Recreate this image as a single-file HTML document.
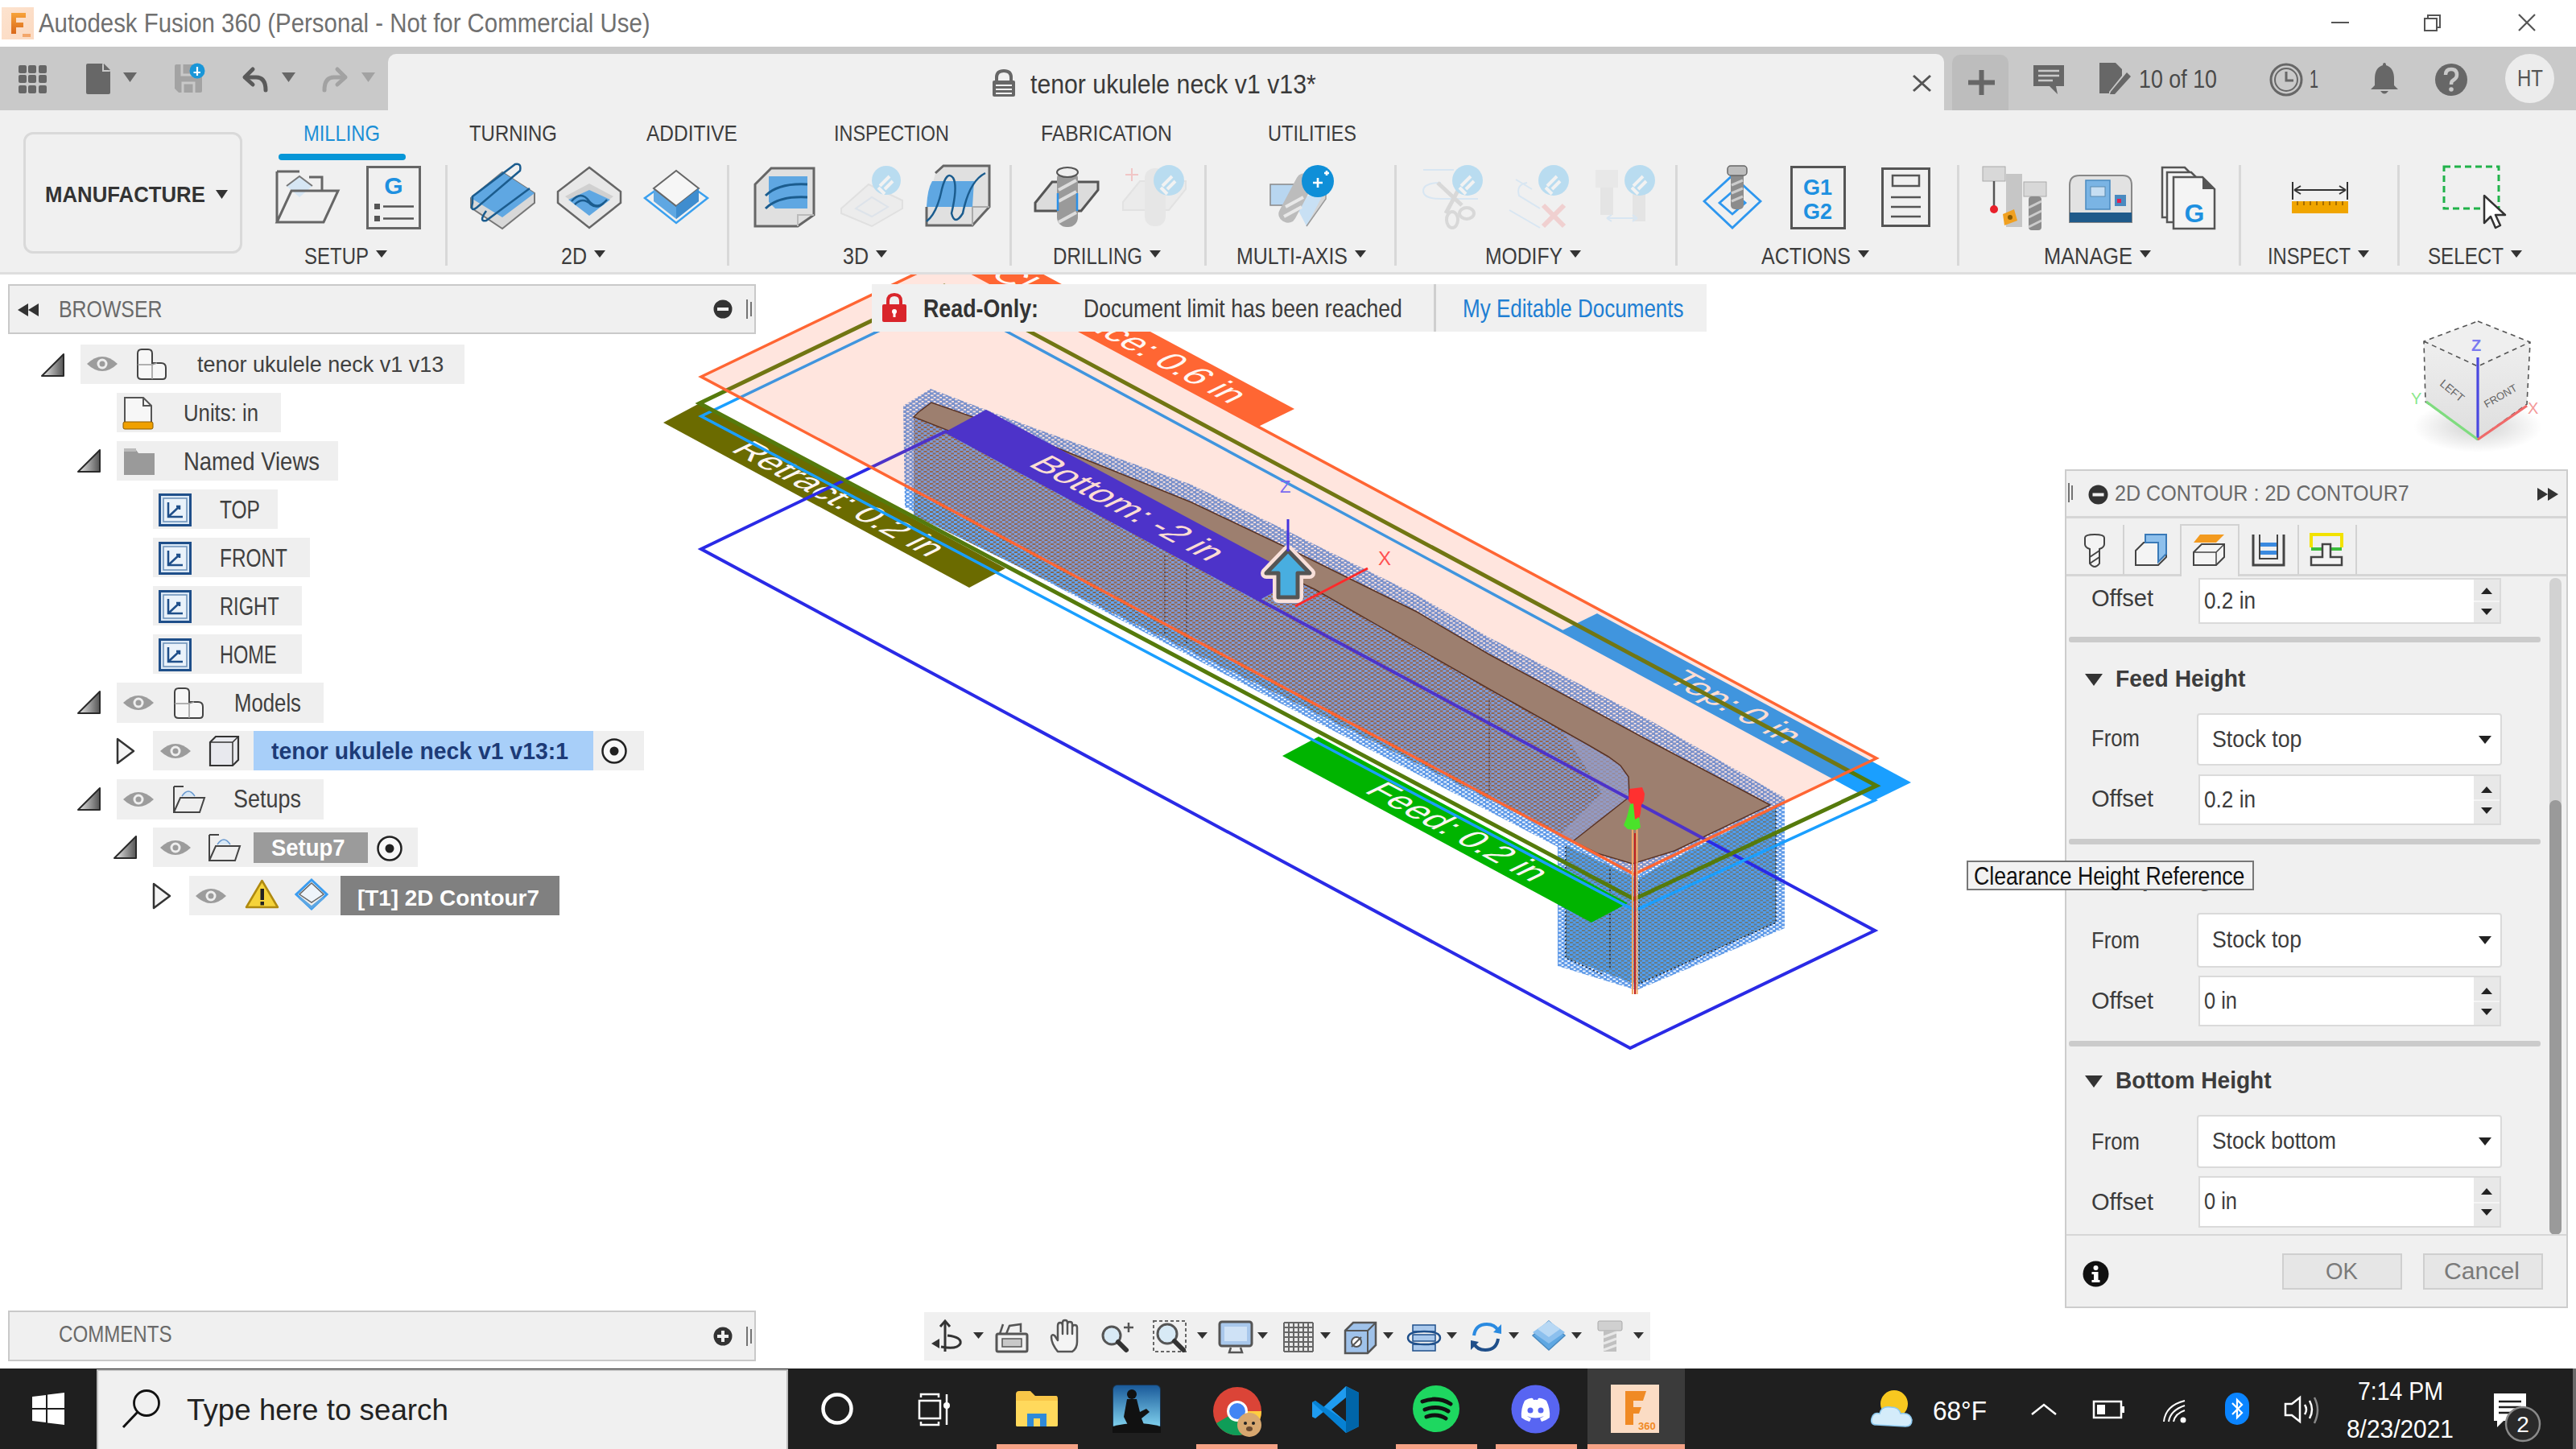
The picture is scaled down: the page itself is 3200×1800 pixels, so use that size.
<!DOCTYPE html>
<html><head><meta charset="utf-8"><title>Fusion 360</title><style>
*{margin:0;padding:0;box-sizing:border-box}
html,body{width:3200px;height:1800px;overflow:hidden;background:#fff;font-family:"Liberation Sans",sans-serif}
.a{position:absolute}
.t{position:absolute;white-space:nowrap;line-height:1;transform-origin:0 0}
svg{position:absolute;overflow:visible}
</style></head><body>
<div class="a" style="left:0px;top:0px;width:3200px;height:58px;background:#ffffff;"></div>
<svg style="left:2px;top:9px;" width="40" height="40" viewBox="0 0 40 40"><defs><linearGradient id="fg" x1="0" y1="0" x2="1" y2="1"><stop offset="0" stop-color="#fde3cf"/><stop offset="1" stop-color="#fbd9c0"/></linearGradient>
<linearGradient id="fo" x1="0" y1="0" x2="0" y2="1"><stop offset="0" stop-color="#f7a33a"/><stop offset="1" stop-color="#d9691b"/></linearGradient></defs>
<rect x="0" y="0" width="40" height="40" fill="url(#fg)"/>
<path d="M12 7 L30 7 L30 13 L18 13 L18 19 L27 19 L27 25 L18 25 L18 33 L12 33 Z" fill="url(#fo)"/>
<rect x="26" y="33" width="10" height="4" fill="#f3a66a"/></svg>
<div class="t" style="left:48.0px;top:13.4px;font-size:32.70px;color:#707070;transform:scaleX(0.8992);">Autodesk Fusion 360 (Personal - Not for Commercial Use)</div>
<div class="a" style="left:2896px;top:27px;width:22px;height:2px;background:#555;"></div>
<svg style="left:3010px;top:17px;" width="26" height="24" viewBox="0 0 26 24"><rect x="2" y="6" width="15" height="15" fill="none" stroke="#555" stroke-width="2"/><path d="M6 6 V2 H21 V17 H17" fill="none" stroke="#555" stroke-width="2"/></svg>
<svg style="left:3127px;top:16px;" width="24" height="24" viewBox="0 0 24 24"><path d="M2 2 L22 22 M22 2 L2 22" stroke="#555" stroke-width="2.2"/></svg>
<div class="a" style="left:0px;top:58px;width:3200px;height:79px;background:#c9c9c9;"></div>
<svg style="left:23px;top:81px;" width="35" height="35" viewBox="0 0 35 35"><rect x="0" y="0" width="10" height="10" rx="2" fill="#666"/><rect x="0" y="12" width="10" height="10" rx="2" fill="#666"/><rect x="0" y="25" width="10" height="10" rx="2" fill="#666"/><rect x="12" y="0" width="10" height="10" rx="2" fill="#666"/><rect x="12" y="12" width="10" height="10" rx="2" fill="#666"/><rect x="12" y="25" width="10" height="10" rx="2" fill="#666"/><rect x="25" y="0" width="10" height="10" rx="2" fill="#666"/><rect x="25" y="12" width="10" height="10" rx="2" fill="#666"/><rect x="25" y="25" width="10" height="10" rx="2" fill="#666"/></svg>
<svg style="left:105px;top:78px;" width="34" height="40" viewBox="0 0 34 40"><path d="M2 3 Q2 1 4 1 L22 1 L32 11 L32 37 Q32 39 30 39 L4 39 Q2 39 2 37 Z" fill="#676767"/><path d="M22 1 L22 11 L32 11" fill="#c9c9c9"/><path d="M24 1 L32 9 L24 9Z" fill="#676767"/></svg>
<svg style="left:153px;top:90px;" width="17" height="12" viewBox="0 0 17 12"><path d="M0 0 H17 L8.5 12 Z" fill="#676767"/></svg>
<svg style="left:216px;top:78px;" width="40" height="40" viewBox="0 0 40 40"><path d="M1 4 Q1 2 3 2 L30 2 L35 7 L35 35 Q35 37 33 37 L6 37 L1 32 Z" fill="#a3a3a3"/><path d="M10 2 V15 H26 V2" fill="none" stroke="#c9c9c9" stroke-width="3"/><path d="M11 37 V25 H25 V37" fill="none" stroke="#c9c9c9" stroke-width="3"/><circle cx="29" cy="10" r="9.5" fill="#1996d8"/><path d="M29 5 V16 M24.5 12 H33" stroke="#fff" stroke-width="2.2"/></svg>
<svg style="left:298px;top:82px;" width="38" height="34" viewBox="0 0 38 34"><path d="M6 14 L16 4 M6 14 L16 23" stroke="#5a5a5a" stroke-width="5" fill="none" stroke-linecap="round"/><path d="M7 14 H20 Q32 14 32 30" stroke="#5a5a5a" stroke-width="5" fill="none" stroke-linecap="round"/></svg>
<svg style="left:350px;top:90px;" width="17" height="12" viewBox="0 0 17 12"><path d="M0 0 H17 L8.5 12 Z" fill="#676767"/></svg>
<svg style="left:397px;top:82px;" width="38" height="34" viewBox="0 0 38 34"><path d="M32 14 L22 4 M32 14 L22 23" stroke="#a2a2a2" stroke-width="5" fill="none" stroke-linecap="round"/><path d="M31 14 H18 Q6 14 6 30" stroke="#a2a2a2" stroke-width="5" fill="none" stroke-linecap="round"/></svg>
<svg style="left:449px;top:90px;" width="17" height="12" viewBox="0 0 17 12"><path d="M0 0 H17 L8.5 12 Z" fill="#a2a2a2"/></svg>
<div class="a" style="left:482px;top:67px;width:1933px;height:70px;background:#f0f0f0;border-radius:10px 10px 0 0"></div>
<svg style="left:1231px;top:86px;" width="32" height="35" viewBox="0 0 32 35"><path d="M7 14 V10 Q7 2 16 2 Q25 2 25 10 V14" fill="none" stroke="#676767" stroke-width="4"/><rect x="2" y="14" width="28" height="20" rx="2" fill="#676767"/><path d="M6 20 H26 M6 25 H26 M6 30 H26" stroke="#f0f0f0" stroke-width="2"/></svg>
<div class="t" style="left:1280.0px;top:88.0px;font-size:33.10px;color:#3a3a3a;transform:scaleX(0.9143);">tenor ukulele neck v1 v13*</div>
<svg style="left:2376px;top:93px;" width="23" height="21" viewBox="0 0 23 21"><path d="M1 1 L22 20 M22 1 L1 20" stroke="#555" stroke-width="3"/></svg>
<div class="a" style="left:2425px;top:68px;width:70px;height:69px;background:#bdbdbd;border-radius:10px 10px 0 0"></div>
<svg style="left:2444px;top:86px;" width="35" height="33" viewBox="0 0 35 33"><path d="M17.5 1 V32 M1 16.5 H34" stroke="#666" stroke-width="6"/></svg>
<svg style="left:2524px;top:79px;" width="42" height="39" viewBox="0 0 42 39"><path d="M2 2 H40 V28 H30 L32 38 L22 28 H2 Z" fill="#676767"/><path d="M8 9 H34 M8 15 H34 M8 21 H26" stroke="#c9c9c9" stroke-width="2.5"/></svg>
<svg style="left:2606px;top:76px;" width="42" height="42" viewBox="0 0 42 42"><path d="M2 2 H22 L30 10 V18 L14 38 V40 H2 Z" fill="#676767"/><path d="M16 38 L36 14 L41 19 L21 41 L15 41 Z" fill="#676767"/></svg>
<div class="t" style="left:2657.0px;top:82.5px;font-size:31.25px;color:#4a4a4a;transform:scaleX(0.8588);">10 of 10</div>
<svg style="left:2818px;top:77px;" width="44" height="44" viewBox="0 0 44 44"><circle cx="22" cy="22" r="19" fill="none" stroke="#676767" stroke-width="3"/><circle cx="22" cy="22" r="14" fill="none" stroke="#676767" stroke-width="2"/><path d="M22 12 V23 H31" fill="none" stroke="#676767" stroke-width="3"/></svg>
<div class="t" style="left:2869.0px;top:83.1px;font-size:30.52px;color:#4a4a4a;transform:scaleX(0.6480);">1</div>
<svg style="left:2944px;top:76px;" width="36" height="42" viewBox="0 0 36 42"><path d="M18 2 Q20 2 20 5 Q30 8 30 22 L30 30 L35 35 H1 L6 30 L6 22 Q6 8 16 5 Q16 2 18 2Z" fill="#676767"/><path d="M13 37 Q18 44 23 37Z" fill="#676767"/></svg>
<svg style="left:3024px;top:78px;" width="42" height="42" viewBox="0 0 42 42"><circle cx="21" cy="21" r="20" fill="#676767"/><path d="M14 15 Q14 8 21 8 Q28 8 28 15 Q28 19 23 22 Q21 23 21 27" fill="none" stroke="#c9c9c9" stroke-width="4.5"/><circle cx="21" cy="33" r="2.8" fill="#c9c9c9"/></svg>
<div class="a" style="left:3112px;top:67px;width:61px;height:61px;border-radius:50%;background:#ececec"></div>
<div class="t" style="left:3127.0px;top:83.4px;font-size:29.07px;color:#555;transform:scaleX(0.8258);">HT</div>
<div class="a" style="left:0px;top:137px;width:3200px;height:204px;background:#f0f0f0;"></div>
<div class="a" style="left:0px;top:338px;width:3200px;height:3px;background:#dedede;"></div>
<div class="a" style="left:29px;top:164px;width:272px;height:151px;border:3px solid #d9d9d9;border-radius:12px;background:#f0f0f0"></div>
<div class="t" style="left:56.0px;top:226.5px;font-size:28.34px;color:#333;font-weight:bold;transform:scaleX(0.9092);">MANUFACTURE</div>
<svg style="left:268px;top:236px;" width="15" height="11" viewBox="0 0 15 11"><path d="M0 0 H15 L7.5 11Z" fill="#333"/></svg>
<div class="t" style="left:377.0px;top:151.0px;font-size:28.34px;color:#1a8fd6;transform:scaleX(0.8377);">MILLING</div>
<div class="t" style="left:583.0px;top:151.0px;font-size:28.34px;color:#3c3c3c;transform:scaleX(0.8442);">TURNING</div>
<div class="t" style="left:803.0px;top:151.0px;font-size:28.34px;color:#3c3c3c;transform:scaleX(0.8645);">ADDITIVE</div>
<div class="t" style="left:1036.0px;top:151.0px;font-size:28.34px;color:#3c3c3c;transform:scaleX(0.8255);">INSPECTION</div>
<div class="t" style="left:1293.0px;top:151.0px;font-size:28.34px;color:#3c3c3c;transform:scaleX(0.8722);">FABRICATION</div>
<div class="t" style="left:1575.0px;top:151.0px;font-size:28.34px;color:#3c3c3c;transform:scaleX(0.8315);">UTILITIES</div>
<div class="a" style="left:346px;top:191px;width:158px;height:8px;background:#0696d7;border-radius:4px"></div>
<div class="t" style="left:377.6px;top:303.9px;font-size:29.07px;color:#3c3c3c;transform:scaleX(0.8254);">SETUP</div>
<svg style="left:466.6px;top:311px;" width="14" height="9" viewBox="0 0 14 9"><path d="M0 0 H14 L7 9Z" fill="#333"/></svg>
<div class="t" style="left:697.0px;top:303.9px;font-size:29.07px;color:#3c3c3c;transform:scaleX(0.8611);">2D</div>
<svg style="left:738px;top:311px;" width="14" height="9" viewBox="0 0 14 9"><path d="M0 0 H14 L7 9Z" fill="#333"/></svg>
<div class="t" style="left:1047.0px;top:303.9px;font-size:29.07px;color:#3c3c3c;transform:scaleX(0.8611);">3D</div>
<svg style="left:1088px;top:311px;" width="14" height="9" viewBox="0 0 14 9"><path d="M0 0 H14 L7 9Z" fill="#333"/></svg>
<div class="t" style="left:1308.0px;top:303.9px;font-size:29.07px;color:#3c3c3c;transform:scaleX(0.8279);">DRILLING</div>
<svg style="left:1428px;top:311px;" width="14" height="9" viewBox="0 0 14 9"><path d="M0 0 H14 L7 9Z" fill="#333"/></svg>
<div class="t" style="left:1536.0px;top:303.9px;font-size:29.07px;color:#3c3c3c;transform:scaleX(0.8572);">MULTI-AXIS</div>
<svg style="left:1683px;top:311px;" width="14" height="9" viewBox="0 0 14 9"><path d="M0 0 H14 L7 9Z" fill="#333"/></svg>
<div class="t" style="left:1845.0px;top:303.9px;font-size:29.07px;color:#3c3c3c;transform:scaleX(0.8492);">MODIFY</div>
<svg style="left:1950px;top:311px;" width="14" height="9" viewBox="0 0 14 9"><path d="M0 0 H14 L7 9Z" fill="#333"/></svg>
<div class="t" style="left:2187.5px;top:303.9px;font-size:29.07px;color:#3c3c3c;transform:scaleX(0.8590);">ACTIONS</div>
<svg style="left:2307.5px;top:311px;" width="14" height="9" viewBox="0 0 14 9"><path d="M0 0 H14 L7 9Z" fill="#333"/></svg>
<div class="t" style="left:2538.5px;top:303.9px;font-size:29.07px;color:#3c3c3c;transform:scaleX(0.8731);">MANAGE</div>
<svg style="left:2657.5px;top:311px;" width="14" height="9" viewBox="0 0 14 9"><path d="M0 0 H14 L7 9Z" fill="#333"/></svg>
<div class="t" style="left:2817.0px;top:303.9px;font-size:29.07px;color:#3c3c3c;transform:scaleX(0.8175);">INSPECT</div>
<svg style="left:2929px;top:311px;" width="14" height="9" viewBox="0 0 14 9"><path d="M0 0 H14 L7 9Z" fill="#333"/></svg>
<div class="t" style="left:3016.0px;top:303.9px;font-size:29.07px;color:#3c3c3c;transform:scaleX(0.8312);">SELECT</div>
<svg style="left:3119px;top:311px;" width="14" height="9" viewBox="0 0 14 9"><path d="M0 0 H14 L7 9Z" fill="#333"/></svg>
<div class="a" style="left:553px;top:205px;width:3px;height:125px;background:#d8d8d8;"></div>
<div class="a" style="left:903px;top:205px;width:3px;height:125px;background:#d8d8d8;"></div>
<div class="a" style="left:1254px;top:205px;width:3px;height:125px;background:#d8d8d8;"></div>
<div class="a" style="left:1496px;top:205px;width:3px;height:125px;background:#d8d8d8;"></div>
<div class="a" style="left:1732px;top:205px;width:3px;height:125px;background:#d8d8d8;"></div>
<div class="a" style="left:2081px;top:205px;width:3px;height:125px;background:#d8d8d8;"></div>
<div class="a" style="left:2431px;top:205px;width:3px;height:125px;background:#d8d8d8;"></div>
<div class="a" style="left:2781px;top:205px;width:3px;height:125px;background:#d8d8d8;"></div>
<div class="a" style="left:2978px;top:205px;width:3px;height:125px;background:#d8d8d8;"></div>
<svg style="left:342px;top:211px;" width="80" height="68" viewBox="0 0 80 68"><path d="M2 2 H30 M2 2 V36" stroke="#666" stroke-width="3" fill="none"/>
<path d="M14 20 L30 8 L46 20 L30 34 Z" fill="#d6e6f4"/><path d="M14 20 L30 8 L46 20" fill="none" stroke="#777" stroke-width="2"/>
<path d="M42 9 H58 V26" fill="none" stroke="#666" stroke-width="3"/>
<path d="M2 65 L20 26 H78 L60 65 Z M2 65 V36" fill="none" stroke="#666" stroke-width="3"/></svg>
<svg style="left:455px;top:206px;" width="68" height="79" viewBox="0 0 68 79"><rect x="1.5" y="1.5" width="65" height="76" fill="none" stroke="#666" stroke-width="3"/>
<text x="34" y="35" text-anchor="middle" font-family="Liberation Sans" font-weight="bold" font-size="30" fill="#1e90e0">G</text>
<rect x="10" y="47" width="7" height="7" fill="#555"/><rect x="10" y="62" width="7" height="7" fill="#555"/>
<path d="M21 50.5 H59 M21 65.5 H59" stroke="#555" stroke-width="2.5"/></svg>
<svg style="left:584px;top:206px;" width="81" height="78" viewBox="0 0 81 78"><path d="M1 40 L40 8 L80 34 L80 46 L40 78 L1 52 Z" fill="#d8d8d8" stroke="#777" stroke-width="2"/>
<path d="M1 40 L40 8 L80 34 L40 64 Z" fill="#5fa7e2"/>
<path d="M3 38 L56 -2 Q64 -4 62 6 L8 52 Q0 58 3 46 Z M20 56 Q10 70 20 68 L74 28" fill="none" stroke="#1b5c8e" stroke-width="2.5"/></svg>
<svg style="left:692px;top:206px;" width="81" height="79" viewBox="0 0 81 79"><path d="M40 2 L79 32 L79 46 L40 77 L1 46 L1 32 Z" fill="#e8e8e8" stroke="#666" stroke-width="2.5"/>
<path d="M40 22 L70 38 L40 60 L10 38 Z" fill="#d0d0d0"/>
<path d="M40 30 L66 42 L40 62 L14 42 Z" fill="#5fa7e2"/>
<path d="M18 44 Q30 30 40 44 Q50 56 62 42 M22 48 Q32 38 42 48 Q50 54 58 46" fill="none" stroke="#1b5c8e" stroke-width="2.5"/></svg>
<svg style="left:800px;top:210px;" width="80" height="69" viewBox="0 0 80 69"><path d="M1 36 L40 8 L79 36 L40 67 Z" fill="none" stroke="#3aa0ef" stroke-width="2.5"/>
<path d="M12 24 L40 2 L68 24 L68 40 L40 62 L12 40 Z" fill="#5fa7e2"/>
<path d="M12 24 L40 2 L68 24 L40 46 Z" fill="#f6f6f6" stroke="#666" stroke-width="2"/>
<path d="M40 46 L68 24 L68 40 L40 62Z" fill="#3f8dcf"/></svg>
<svg style="left:937px;top:207px;" width="76" height="76" viewBox="0 0 76 76"><path d="M1 22 L21 2 H74 V60 L54 74 H1 Z" fill="#e0e0e0" stroke="#666" stroke-width="3"/>
<path d="M54 74 V60 H74" fill="none" stroke="#bbb" stroke-width="2"/>
<path d="M18 12 H66 V52 H26 L18 44 Z" fill="#5fa7e2"/>
<path d="M14 36 Q30 20 66 22 M14 52 Q30 36 66 38" fill="none" stroke="#1b5c8e" stroke-width="3"/></svg>
<svg style="left:1043px;top:205px;" width="80" height="78" viewBox="0 0 80 78"><path d="M2 54 L36 24 L78 44 L78 54 L40 76 L2 60Z" fill="#ececec" stroke="#e0e0e0" stroke-width="2"/>
<path d="M20 54 L40 40 L60 52 L40 64Z" fill="none" stroke="#dde3ea" stroke-width="2"/>
<circle cx="58" cy="19" r="18" fill="#b9dcf0"/><path d="M50 26 L62 14 M56 30 L66 20 M48 28 L56 36" stroke="#f2f2f2" stroke-width="4"/></svg>
<svg style="left:1150px;top:205px;" width="80" height="77" viewBox="0 0 80 77"><path d="M12 10 L22 1 H79 V52 L58 75 H1 V52" fill="#e0e0e0" stroke="#666" stroke-width="3"/>
<path d="M58 75 V52 H79" fill="none" stroke="#aaa" stroke-width="2"/>
<path d="M8 20 H60 L58 52 H1 Q2 30 8 20Z" fill="#5fa7e2"/>
<path d="M1 70 Q14 60 20 30 Q26 6 34 16 Q40 26 32 60 Q36 76 46 60 Q54 20 74 10" fill="none" stroke="#1b5c8e" stroke-width="2.5"/></svg>
<svg style="left:1285px;top:206px;" width="80" height="79" viewBox="0 0 80 79"><path d="M1 46 L22 20 H79 V30 L58 56 H1 Z" fill="#dcdcdc" stroke="#555" stroke-width="3"/>
<rect x="28" y="4" width="26" height="72" rx="12" fill="#9a9a9a"/>
<ellipse cx="41" cy="8" rx="13" ry="6" fill="#eee" stroke="#555" stroke-width="2"/>
<path d="M30 30 L52 18 M30 44 L52 32 M30 70 L52 58" stroke="#ddd" stroke-width="4"/>
<path d="M29 34 V56 M53 34 V56" stroke="#2a90e8" stroke-width="2.5"/></svg>
<svg style="left:1394px;top:205px;" width="79" height="79" viewBox="0 0 79 79"><path d="M1 46 L22 20 H79 V30 L58 56 H1 Z" fill="#ebebeb" stroke="#e2e2e2" stroke-width="2"/>
<rect x="28" y="4" width="26" height="72" rx="12" fill="#e6e6e6"/>
<path d="M4 12 H20 M12 4 V20" stroke="#f1c6c6" stroke-width="2"/>
<circle cx="58" cy="19" r="19" fill="#b9dcf0"/><path d="M50 26 L62 14 M56 30 L66 20 M48 28 L56 36" stroke="#f2f2f2" stroke-width="4"/></svg>
<svg style="left:1577px;top:205px;" width="81" height="78" viewBox="0 0 81 78"><path d="M1 24 H40 V50 H1Z" fill="#b8d6f0" stroke="#888" stroke-width="1.5"/>
<path d="M30 45 L70 30 V40 L46 76 Z" fill="#c8e0f4"/><path d="M70 30 V42 L46 76" fill="#d5d5d5" stroke="#999" stroke-width="1.5"/>
<rect x="22" y="8" width="22" height="66" rx="10" transform="rotate(28 33 41)" fill="#bcbcbc"/>
<path d="M20 52 L42 40 M18 64 L40 52" stroke="#e8e8e8" stroke-width="4"/>
<circle cx="60" cy="20" r="20" fill="#0f8fd8"/><path d="M54 22 H66 M60 16 V28 M68 10 H74 M71 7 V13" stroke="#fff" stroke-width="2.6"/></svg>
<svg style="left:1766px;top:205px;" width="77" height="80" viewBox="0 0 77 80"><path d="M2 6 H40 M24 22 Q2 22 2 32 Q2 42 24 42 H70" fill="none" stroke="#d8e6f2" stroke-width="2"/>
<path d="M20 22 L50 50 M46 30 L30 60" stroke="#d8d8d8" stroke-width="5"/><ellipse cx="38" cy="68" rx="7" ry="10" fill="none" stroke="#d8d8d8" stroke-width="4"/><ellipse cx="56" cy="60" rx="9" ry="7" fill="none" stroke="#d8d8d8" stroke-width="4"/>
<circle cx="57" cy="19" r="19" fill="#b9dcf0"/><path d="M49 26 L61 14 M55 30 L65 20 M47 28 L55 36" stroke="#f2f2f2" stroke-width="4"/></svg>
<svg style="left:1873px;top:205px;" width="77" height="80" viewBox="0 0 77 80"><path d="M10 18 L30 30 M2 56 L40 78 M24 22 Q10 24 14 38 L40 54" fill="none" stroke="#d8e6f2" stroke-width="2"/>
<path d="M44 50 L70 76 M70 50 L44 76" stroke="#f0d0d0" stroke-width="6"/>
<circle cx="57" cy="19" r="19" fill="#b9dcf0"/><path d="M49 26 L61 14 M55 30 L65 20 M47 28 L55 36" stroke="#f2f2f2" stroke-width="4"/></svg>
<svg style="left:1980px;top:205px;" width="78" height="80" viewBox="0 0 78 80"><rect x="2" y="6" width="28" height="22" fill="#e8e8e8"/><rect x="8" y="28" width="16" height="34" fill="#e4e4e4"/><rect x="48" y="36" width="16" height="34" fill="#e4e4e4"/>
<path d="M16 66 H54 M16 66 L22 62 M16 66 L22 70 M54 66 L48 62 M54 66 L48 70" stroke="#d8e6f2" stroke-width="2" fill="none"/>
<circle cx="57" cy="19" r="19" fill="#b9dcf0"/><path d="M49 26 L61 14 M55 30 L65 20 M47 28 L55 36" stroke="#f2f2f2" stroke-width="4"/></svg>
<svg style="left:2116px;top:204px;" width="72" height="80" viewBox="0 0 72 80"><path d="M36 14 L71 46 L36 79 L1 46Z" fill="none" stroke="#2e97ef" stroke-width="2.8"/>
<path d="M36 34 L52 48 L36 62 L20 48Z" fill="none" stroke="#2e97ef" stroke-width="2.8"/>
<rect x="34" y="10" width="16" height="46" rx="5" fill="#8c8c8c"/><rect x="30" y="2" width="24" height="12" rx="4" fill="#bdbdbd" stroke="#666" stroke-width="1.5"/>
<path d="M35 26 L49 20 M35 36 L49 30 M35 46 L49 40" stroke="#ccc" stroke-width="3"/></svg>
<svg style="left:2224px;top:206px;" width="70" height="79" viewBox="0 0 70 79"><rect x="1.5" y="1.5" width="66" height="76" fill="none" stroke="#555" stroke-width="3"/>
<text x="34" y="36" text-anchor="middle" font-family="Liberation Sans" font-weight="bold" font-size="27" fill="#1e90e0">G1</text>
<text x="34" y="66" text-anchor="middle" font-family="Liberation Sans" font-weight="bold" font-size="27" fill="#1e90e0">G2</text></svg>
<svg style="left:2337px;top:208px;" width="61" height="74" viewBox="0 0 61 74"><rect x="1.5" y="1.5" width="58" height="71" fill="none" stroke="#555" stroke-width="3"/>
<rect x="14" y="10" width="33" height="13" fill="none" stroke="#555" stroke-width="2.5"/>
<path d="M12 37 H49 M12 49 H49 M12 61 H49" stroke="#555" stroke-width="2.5"/></svg>
<svg style="left:2462px;top:206px;" width="81" height="80" viewBox="0 0 81 80"><rect x="1" y="1" width="28" height="18" fill="#d8d8d8" stroke="#aaa"/><path d="M15 19 V52" stroke="#555" stroke-width="2.5"/><circle cx="15" cy="54" r="5" fill="#e8202a"/>
<rect x="30" y="10" width="20" height="66" fill="#c6c6c6"/>
<path d="M26 60 L40 54 L44 68 L28 74Z" fill="#f0a020"/><circle cx="35" cy="64" r="3" fill="#8a5a00"/>
<rect x="52" y="20" width="28" height="18" fill="#d8d8d8" stroke="#aaa"/><rect x="58" y="38" width="16" height="42" rx="4" fill="#8c8c8c"/>
<path d="M58 52 L74 44 M58 64 L74 56 M58 76 L74 68" stroke="#ccc" stroke-width="3"/></svg>
<svg style="left:2569px;top:216px;" width="81" height="62" viewBox="0 0 81 62"><path d="M2 14 Q2 2 14 2 H68 Q79 2 79 14 V60 H2 Z" fill="#e2e2e2" stroke="#888" stroke-width="2"/>
<rect x="2" y="48" width="77" height="12" fill="#1f5a8a"/>
<rect x="22" y="8" width="30" height="36" fill="#7ab4e4" stroke="#4a8ac0" stroke-width="1.5"/><rect x="28" y="16" width="18" height="12" fill="#c6def2" stroke="#5a8ab0"/>
<rect x="58" y="26" width="14" height="14" fill="#4a8ac0"/><rect x="61" y="31" width="5" height="5" fill="#e02050"/></svg>
<svg style="left:2684px;top:206px;" width="69" height="80" viewBox="0 0 69 80"><path d="M2 2 H30 L36 8 V64 H2Z" fill="#f4f4f4" stroke="#555" stroke-width="2.5"/>
<path d="M8 8 H38 L44 14 V70 H8Z" fill="#f4f4f4" stroke="#555" stroke-width="2.5"/>
<path d="M16 14 H52 L67 29 V78 H16Z" fill="#f4f4f4" stroke="#555" stroke-width="2.5"/><path d="M52 14 V29 H67Z" fill="#555"/>
<text x="42" y="70" text-anchor="middle" font-family="Liberation Sans" font-weight="bold" font-size="32" fill="#1e90e0">G</text></svg>
<svg style="left:2846px;top:224px;" width="72" height="42" viewBox="0 0 72 42"><path d="M2 2 V24 M70 2 V24 M4 12 H68 M4 12 L12 7 M4 12 L12 17 M68 12 L60 7 M68 12 L60 17" stroke="#333" stroke-width="2" fill="none"/>
<rect x="1" y="26" width="70" height="15" fill="#f0a500"/>
<path d="M8 26 V31 M16 26 V31 M24 26 V31 M32 26 V31 M40 26 V31 M48 26 V31 M56 26 V31 M64 26 V31" stroke="#8a5a00" stroke-width="1.5"/></svg>
<svg style="left:3034px;top:205px;" width="82" height="80" viewBox="0 0 82 80"><rect x="2" y="2" width="68" height="52" fill="none" stroke="#21b24a" stroke-width="3" stroke-dasharray="8 5"/>
<path d="M52 38 L52 72 L60 64 L66 78 L72 75 L66 62 L78 62 Z" fill="#fff" stroke="#333" stroke-width="2.5" stroke-linejoin="round"/></svg>
<div class="a" style="left:10px;top:353px;width:929px;height:62px;background:#f0f0f0;border:2px solid #c9c9c9"></div>
<svg style="left:22px;top:377px;" width="27" height="16" viewBox="0 0 27 16"><path d="M13 0 V16 L0 8Z M26 0 V16 L13 8Z" fill="#333"/></svg>
<div class="t" style="left:72.7px;top:368.8px;font-size:29.80px;color:#6a6a6a;transform:scaleX(0.8346);">BROWSER</div>
<svg style="left:886px;top:372px;" width="24" height="24" viewBox="0 0 24 24"><circle cx="12" cy="12" r="11.5" fill="#333"/><rect x="5" y="10" width="14" height="4" fill="#f0f0f0"/></svg>
<svg style="left:926px;top:372px;" width="10" height="24" viewBox="0 0 10 24"><path d="M2 0 V24 M7 3 V21" stroke="#555" stroke-width="1.6"/></svg>
<svg style="left:51px;top:439px;" width="30" height="29" viewBox="0 0 30 29"><defs><linearGradient id="tg439" x1="0" y1="0" x2="1" y2="0"><stop offset="0" stop-color="#eee"/><stop offset="1" stop-color="#555"/></linearGradient></defs><path d="M28 1 V28 H1 Z" fill="url(#tg439)" stroke="#2a2a2a" stroke-width="2" stroke-linejoin="round"/></svg>
<div class="a" style="left:100px;top:428px;width:477px;height:49px;background:#efefef;"></div>
<svg style="left:107px;top:440px;" width="40" height="24" viewBox="0 0 40 24"><path d="M1 12 Q20 -6 39 12 Q20 30 1 12Z" fill="#9c9c9c"/><circle cx="20" cy="12" r="6.5" fill="#eee"/><circle cx="20" cy="12" r="3.5" fill="#9c9c9c"/></svg>
<svg style="left:168px;top:431px;" width="42" height="42" viewBox="0 0 42 42"><path d="M3 8 Q3 3 8 3 H16 Q21 3 21 8 V20 H32 Q38 20 38 26 V36 Q38 40 34 40 H8 Q3 40 3 36 Z" fill="#f7f7f7" stroke="#444" stroke-width="2"/><path d="M3 22 H21 V40 M21 22 L27 20" fill="none" stroke="#999" stroke-width="1.5"/></svg>
<div class="t" style="left:245.0px;top:440.3px;font-size:27.03px;color:#404040;transform:scaleX(1.0000);">tenor ukulele neck v1 v13</div>
<div class="a" style="left:145px;top:488px;width:204px;height:49px;background:#efefef;"></div>
<svg style="left:152px;top:492px;" width="40" height="42" viewBox="0 0 40 42"><path d="M3 2 H26 L36 12 V34 H3 Z" fill="#f7f7f7" stroke="#555" stroke-width="2"/><path d="M26 2 V12 H36" fill="none" stroke="#555" stroke-width="2"/><rect x="1" y="32" width="37" height="9" rx="2" fill="#f0a000" stroke="#8a5a00" stroke-width="1"/></svg>
<div class="t" style="left:228.0px;top:498.3px;font-size:29.65px;color:#404040;transform:scaleX(0.8683);">Units: in</div>
<svg style="left:96px;top:558px;" width="30" height="29" viewBox="0 0 30 29"><defs><linearGradient id="tg558" x1="0" y1="0" x2="1" y2="0"><stop offset="0" stop-color="#eee"/><stop offset="1" stop-color="#555"/></linearGradient></defs><path d="M28 1 V28 H1 Z" fill="url(#tg558)" stroke="#2a2a2a" stroke-width="2" stroke-linejoin="round"/></svg>
<div class="a" style="left:145px;top:548px;width:275px;height:49px;background:#efefef;"></div>
<svg style="left:153px;top:555px;" width="40" height="36" viewBox="0 0 40 36"><path d="M1 4 H16 L19 8 H39 V35 H1 Z" fill="#9a9a9a"/><rect x="1" y="2" width="15" height="4" fill="#bbb"/></svg>
<div class="t" style="left:228.0px;top:558.1px;font-size:30.52px;color:#404040;transform:scaleX(0.9001);">Named Views</div>
<div class="a" style="left:190px;top:608px;width:155px;height:49px;background:#efefef;"></div>
<svg style="left:197px;top:613px;" width="41" height="41" viewBox="0 0 41 41"><rect x="1.5" y="1.5" width="38" height="38" fill="#dbe8f5" stroke="#1f4f8a" stroke-width="3"/><rect x="6" y="6" width="29" height="29" fill="#eaf2fa" stroke="#6a8fb8" stroke-width="1.5"/><path d="M12 11 V29 H30 M12 29 L26 16 M22 16 H26 V20" fill="none" stroke="#1f4f8a" stroke-width="2.5"/></svg>
<div class="t" style="left:273.0px;top:618.1px;font-size:30.52px;color:#404040;transform:scaleX(0.8039);">TOP</div>
<div class="a" style="left:190px;top:668px;width:195px;height:49px;background:#efefef;"></div>
<svg style="left:197px;top:673px;" width="41" height="41" viewBox="0 0 41 41"><rect x="1.5" y="1.5" width="38" height="38" fill="#dbe8f5" stroke="#1f4f8a" stroke-width="3"/><rect x="6" y="6" width="29" height="29" fill="#eaf2fa" stroke="#6a8fb8" stroke-width="1.5"/><path d="M12 11 V29 H30 M12 29 L26 16 M22 16 H26 V20" fill="none" stroke="#1f4f8a" stroke-width="2.5"/></svg>
<div class="t" style="left:273.0px;top:678.1px;font-size:30.52px;color:#404040;transform:scaleX(0.7991);">FRONT</div>
<div class="a" style="left:190px;top:728px;width:184.60000000000002px;height:49px;background:#efefef;"></div>
<svg style="left:197px;top:733px;" width="41" height="41" viewBox="0 0 41 41"><rect x="1.5" y="1.5" width="38" height="38" fill="#dbe8f5" stroke="#1f4f8a" stroke-width="3"/><rect x="6" y="6" width="29" height="29" fill="#eaf2fa" stroke="#6a8fb8" stroke-width="1.5"/><path d="M12 11 V29 H30 M12 29 L26 16 M22 16 H26 V20" fill="none" stroke="#1f4f8a" stroke-width="2.5"/></svg>
<div class="t" style="left:273.0px;top:738.1px;font-size:30.52px;color:#404040;transform:scaleX(0.7751);">RIGHT</div>
<div class="a" style="left:190px;top:788px;width:184.60000000000002px;height:49px;background:#efefef;"></div>
<svg style="left:197px;top:793px;" width="41" height="41" viewBox="0 0 41 41"><rect x="1.5" y="1.5" width="38" height="38" fill="#dbe8f5" stroke="#1f4f8a" stroke-width="3"/><rect x="6" y="6" width="29" height="29" fill="#eaf2fa" stroke="#6a8fb8" stroke-width="1.5"/><path d="M12 11 V29 H30 M12 29 L26 16 M22 16 H26 V20" fill="none" stroke="#1f4f8a" stroke-width="2.5"/></svg>
<div class="t" style="left:273.0px;top:798.1px;font-size:30.52px;color:#404040;transform:scaleX(0.7710);">HOME</div>
<svg style="left:96px;top:858px;" width="30" height="29" viewBox="0 0 30 29"><defs><linearGradient id="tg858" x1="0" y1="0" x2="1" y2="0"><stop offset="0" stop-color="#eee"/><stop offset="1" stop-color="#555"/></linearGradient></defs><path d="M28 1 V28 H1 Z" fill="url(#tg858)" stroke="#2a2a2a" stroke-width="2" stroke-linejoin="round"/></svg>
<div class="a" style="left:145px;top:848px;width:257px;height:50px;background:#efefef;"></div>
<svg style="left:152px;top:861px;" width="40" height="24" viewBox="0 0 40 24"><path d="M1 12 Q20 -6 39 12 Q20 30 1 12Z" fill="#9c9c9c"/><circle cx="20" cy="12" r="6.5" fill="#eee"/><circle cx="20" cy="12" r="3.5" fill="#9c9c9c"/></svg>
<svg style="left:214px;top:852px;" width="42" height="42" viewBox="0 0 42 42"><path d="M3 8 Q3 3 8 3 H16 Q21 3 21 8 V20 H32 Q38 20 38 26 V36 Q38 40 34 40 H8 Q3 40 3 36 Z" fill="#f7f7f7" stroke="#444" stroke-width="2"/><path d="M3 22 H21 V40 M21 22 L27 20" fill="none" stroke="#999" stroke-width="1.5"/></svg>
<div class="t" style="left:290.7px;top:858.1px;font-size:30.52px;color:#404040;transform:scaleX(0.8435);">Models</div>
<svg style="left:144px;top:916px;" width="24" height="34" viewBox="0 0 24 34"><path d="M2 2 L22 17 L2 32 Z" fill="#f4f4f4" stroke="#333" stroke-width="2.5" stroke-linejoin="round"/></svg>
<div class="a" style="left:190px;top:908px;width:610px;height:49px;background:#efefef;"></div>
<svg style="left:198px;top:921px;" width="40" height="24" viewBox="0 0 40 24"><path d="M1 12 Q20 -6 39 12 Q20 30 1 12Z" fill="#9c9c9c"/><circle cx="20" cy="12" r="6.5" fill="#eee"/><circle cx="20" cy="12" r="3.5" fill="#9c9c9c"/></svg>
<svg style="left:258px;top:912px;" width="42" height="42" viewBox="0 0 42 42"><path d="M3 10 L10 3 H38 V32 L31 39 H3 Z" fill="#e8e9ee" stroke="#333" stroke-width="2.2"/><path d="M3 10 H31 V39 M31 10 L38 3" fill="none" stroke="#333" stroke-width="1.5"/></svg>
<div class="a" style="left:315px;top:908px;width:422px;height:49px;background:#a8cff9;"></div>
<div class="t" style="left:336.6px;top:918.0px;font-size:29.51px;color:#1d3b77;font-weight:bold;transform:scaleX(0.9615);">tenor ukulele neck v1 v13:1</div>
<svg style="left:746px;top:916px;" width="34" height="34" viewBox="0 0 34 34"><circle cx="17" cy="17" r="14.5" fill="#f8f8f8" stroke="#222" stroke-width="2.5"/><circle cx="17" cy="17" r="5.5" fill="#222"/></svg>
<svg style="left:96px;top:978px;" width="30" height="29" viewBox="0 0 30 29"><defs><linearGradient id="tg978" x1="0" y1="0" x2="1" y2="0"><stop offset="0" stop-color="#eee"/><stop offset="1" stop-color="#555"/></linearGradient></defs><path d="M28 1 V28 H1 Z" fill="url(#tg978)" stroke="#2a2a2a" stroke-width="2" stroke-linejoin="round"/></svg>
<div class="a" style="left:145px;top:968px;width:257px;height:50px;background:#efefef;"></div>
<svg style="left:152px;top:981px;" width="40" height="24" viewBox="0 0 40 24"><path d="M1 12 Q20 -6 39 12 Q20 30 1 12Z" fill="#9c9c9c"/><circle cx="20" cy="12" r="6.5" fill="#eee"/><circle cx="20" cy="12" r="3.5" fill="#9c9c9c"/></svg>
<svg style="left:214px;top:975px;" width="42" height="36" viewBox="0 0 42 36"><path d="M2 2 V34 H34 L40 16 H10 L2 34" fill="none" stroke="#444" stroke-width="2"/><path d="M2 2 H14" stroke="#444" stroke-width="2"/><path d="M12 14 Q20 2 28 14" fill="#d8e8f6" stroke="#6a9ad0" stroke-width="1.5"/></svg>
<div class="t" style="left:290.0px;top:977.8px;font-size:30.96px;color:#404040;transform:scaleX(0.8715);">Setups</div>
<svg style="left:141px;top:1038px;" width="30" height="29" viewBox="0 0 30 29"><defs><linearGradient id="tg1038" x1="0" y1="0" x2="1" y2="0"><stop offset="0" stop-color="#eee"/><stop offset="1" stop-color="#555"/></linearGradient></defs><path d="M28 1 V28 H1 Z" fill="url(#tg1038)" stroke="#2a2a2a" stroke-width="2" stroke-linejoin="round"/></svg>
<div class="a" style="left:190px;top:1028px;width:329px;height:49px;background:#efefef;"></div>
<svg style="left:198px;top:1041px;" width="40" height="24" viewBox="0 0 40 24"><path d="M1 12 Q20 -6 39 12 Q20 30 1 12Z" fill="#9c9c9c"/><circle cx="20" cy="12" r="6.5" fill="#eee"/><circle cx="20" cy="12" r="3.5" fill="#9c9c9c"/></svg>
<svg style="left:258px;top:1035px;" width="42" height="36" viewBox="0 0 42 36"><path d="M2 2 V34 H34 L40 16 H10 L2 34" fill="none" stroke="#444" stroke-width="2"/><path d="M2 2 H14" stroke="#444" stroke-width="2"/><path d="M12 14 Q20 2 28 14" fill="#d8e8f6" stroke="#6a9ad0" stroke-width="1.5"/></svg>
<div class="a" style="left:315px;top:1034px;width:142px;height:38px;background:#9b9b9b;"></div>
<div class="t" style="left:337.0px;top:1038.2px;font-size:29.94px;color:#ffffff;font-weight:bold;transform:scaleX(0.9176);">Setup7</div>
<svg style="left:467px;top:1037px;" width="34" height="34" viewBox="0 0 34 34"><circle cx="17" cy="17" r="14.5" fill="#f8f8f8" stroke="#222" stroke-width="2.5"/><circle cx="17" cy="17" r="5.5" fill="#222"/></svg>
<svg style="left:189px;top:1096px;" width="24" height="34" viewBox="0 0 24 34"><path d="M2 2 L22 17 L2 32 Z" fill="#f4f4f4" stroke="#333" stroke-width="2.5" stroke-linejoin="round"/></svg>
<div class="a" style="left:235px;top:1088px;width:460px;height:49px;background:#efefef;"></div>
<svg style="left:242px;top:1101px;" width="40" height="24" viewBox="0 0 40 24"><path d="M1 12 Q20 -6 39 12 Q20 30 1 12Z" fill="#9c9c9c"/><circle cx="20" cy="12" r="6.5" fill="#eee"/><circle cx="20" cy="12" r="3.5" fill="#9c9c9c"/></svg>
<svg style="left:305px;top:1092px;" width="41" height="38" viewBox="0 0 41 38"><path d="M20.5 2 L40 35 H1 Z" fill="#f5d33a" stroke="#b08a10" stroke-width="2.5" stroke-linejoin="round"/><rect x="18.5" y="12" width="4.5" height="14" fill="#222"/><rect x="18.5" y="28" width="4.5" height="4.5" fill="#222"/></svg>
<svg style="left:366px;top:1091px;" width="42" height="42" viewBox="0 0 42 42"><path d="M21 2 L40 20 L21 38 L2 20Z" fill="none" stroke="#3a9cf0" stroke-width="3"/><path d="M21 6 L36 20 L21 30 L6 20Z" fill="#eef4fa" stroke="#666" stroke-width="1.5"/><path d="M6 24 L21 36 L36 24" fill="none" stroke="#5fa7e2" stroke-width="3"/></svg>
<div class="a" style="left:423px;top:1088px;width:272px;height:49px;background:#808080;"></div>
<div class="t" style="left:443.5px;top:1100.5px;font-size:28.34px;color:#ffffff;font-weight:bold;transform:scaleX(0.9831);">[T1] 2D Contour7</div>
<div class="a" style="left:0;top:341px;width:3200px;height:1359px;overflow:hidden"><svg style="left:0;top:-341px" width="3200" height="1800" viewBox="0 0 3200 1800"><defs>
<pattern id="hFront" width="7.5" height="5" patternUnits="userSpaceOnUse"><rect width="7.5" height="5" fill="#64a6f6"/><rect x="0" y="0" width="4" height="2" fill="#806550"/><rect x="3.75" y="2.5" width="4" height="2" fill="#806550"/></pattern>
<pattern id="hBand" width="7.5" height="5" patternUnits="userSpaceOnUse"><rect width="7.5" height="5" fill="#5f9ae8"/><rect x="1" y="0.5" width="3.5" height="1.8" fill="#ffffff"/><rect x="4.75" y="3" width="3.5" height="1.8" fill="#ffffff"/></pattern>
<pattern id="hHeel" width="7.5" height="5" patternUnits="userSpaceOnUse"><rect width="7.5" height="5" fill="#4f9df0"/><rect x="0" y="0" width="4" height="2" fill="#6a7a80"/><rect x="3.75" y="2.5" width="4" height="2" fill="#6a7a80"/></pattern>
<clipPath id="cq"><polygon points="871.0,468.0 1175.0,322.0 2331.0,942.0 2030.0,1086.0"/></clipPath>
</defs><polygon points="1122.0,504.0 1156.0,483.0 1280.0,530.0 1480.0,602.0 1600.0,660.0 1760.0,739.0 1850.0,792.0 2050.0,895.0 2217.0,991.0 2217.0,1153.0 2033.0,1230.0 1935.0,1200.0 1935.0,1052.0 1599.0,878.0 1124.0,630.0" fill="url(#hBand)"/><polygon points="1135.0,518.0 1400.0,622.0 1633.0,732.0 1850.0,856.0 1974.0,926.0 1998.0,940.0 2013.0,951.0 2023.0,965.0 2024.0,990.0 1954.0,1045.0 1599.0,868.0 1135.0,640.0" fill="url(#hFront)"/><polygon points="1940.0,906.0 1974.0,926.0 1998.0,940.0 2013.0,951.0 2023.0,965.0 2024.0,990.0 1954.0,1045.0 1935.0,1040.0 1990.0,985.0" fill="#86a8dc" opacity="0.7"/><polygon points="1141.0,512.0 1157.0,500.0 1280.0,543.0 1480.0,624.0 1600.0,681.0 1760.0,760.0 1850.0,813.0 2050.0,921.0 2199.0,1000.0 2080.0,1057.0 2028.0,1073.0 1984.0,1060.0 1954.0,1045.0 2024.0,990.0 2023.0,965.0 2013.0,951.0 1998.0,940.0 1974.0,926.0 1850.0,856.0 1633.0,732.0 1400.0,622.0 1135.0,518.0" fill="#8a857a" stroke="#3a2a20" stroke-width="1.5"/><path d="M1447 690 V790 M1474 702 V800 M1850 870 V985" stroke="#333" stroke-width="1.5" stroke-dasharray="2 3" fill="none"/><polygon points="1945.0,1050.0 2030.0,1090.0 2030.0,1222.0 1945.0,1190.0" fill="url(#hHeel)"/><polygon points="2036.0,1090.0 2206.0,1002.0 2206.0,1146.0 2036.0,1222.0" fill="url(#hHeel)"/><path d="M1945 1052 V1190 L1990 1210 M2000 1080 V1205 M2036 1095 V1222 L2206 1146 V1002" stroke="#222" stroke-width="1.5" stroke-dasharray="2 3" fill="none"/><polygon points="1175.0,536.0 1565.0,745.0 1615.0,718.0 1225.0,509.0" fill="#2a2ae6"/><g transform="matrix(0.8814 0.4723 -0.8984 0.4392 1402.1 630.8)"><text x="0" y="0" text-anchor="middle" dominant-baseline="central" font-family="Liberation Sans" font-size="45" fill="#fff6f2">Bottom: -2 in</text></g><polygon points="1939.0,784.0 2329.0,994.0 2374.0,972.0 1984.0,762.0" fill="#1a9fff"/><g transform="matrix(0.8805 0.4741 -0.8984 0.4392 2156.5 878.0)"><text x="0" y="0" text-anchor="middle" dominant-baseline="central" font-family="Liberation Sans" font-size="45" fill="#fff6f2">Top: 0 in</text></g><polygon points="869.0,501.0 1249.0,706.0 1204.0,730.0 824.0,525.0" fill="#6b6b00"/><g transform="matrix(0.8801 0.4748 -0.8984 0.4392 1043.5 619.3)"><text x="0" y="0" text-anchor="middle" dominant-baseline="central" font-family="Liberation Sans" font-size="45" fill="#fff6f2">Retract: 0.2 in</text></g><polygon points="1638.0,915.0 2022.0,1122.0 1977.0,1146.0 1593.0,939.0" fill="#00b400"/><g transform="matrix(0.8803 0.4745 -0.8984 0.4392 1811.9 1032.9)"><text x="0" y="0" text-anchor="middle" dominant-baseline="central" font-family="Liberation Sans" font-size="45" fill="#fff6f2">Feed: 0.2 in</text></g><polygon points="1175.0,322.0 1563.0,530.0 1608.0,508.0 1220.0,300.0" fill="#ff6633"/><g transform="matrix(0.8813 0.4725 -0.8984 0.4392 1391.5 415.0)"><text x="0" y="0" text-anchor="middle" dominant-baseline="central" font-family="Liberation Sans" font-size="45" fill="#fff6f2">Clearance: 0.6 in</text></g><polygon points="871.0,682.0 1175.0,536.0 2329.0,1156.0 2025.0,1302.0" fill="none" stroke="#2a2ae6" stroke-width="4" stroke-linejoin="miter"/><polygon points="871.0,517.0 1175.0,371.0 2329.0,994.0 2031.0,1131.0" fill="none" stroke="#1a9fff" stroke-width="3.5" stroke-linejoin="miter"/><polygon points="869.0,501.0 1173.0,355.0 2331.0,976.0 2030.0,1117.0" fill="none" stroke="#557a0c" stroke-width="5" stroke-linejoin="miter"/><polygon points="871.0,468.0 1175.0,322.0 2331.0,942.0 2030.0,1086.0" fill="none" stroke="#ff6633" stroke-width="3.5" stroke-linejoin="miter"/><polygon points="871.0,468.0 1175.0,322.0 2331.0,942.0 2030.0,1086.0" fill="#ff643c" fill-opacity="0.17"/><path d="M2028 1030 V1235" stroke="#f0a868" stroke-width="2.2"/><path d="M2033.5 1030 V1235" stroke="#f0a868" stroke-width="2.2"/><path d="M2031 1035 V1235" stroke="#c02020" stroke-width="2"/><path d="M2024 980 L2040 978 L2043 986 L2042 995 L2039 1000 L2038 1010 L2035 1022 L2031 1020 L2028 1000 L2023 995 Z" fill="#ff3030"/><path d="M2025 999 L2029 998 L2031 1018 L2036 1015 L2038 1028 L2032 1031 L2022 1030 L2017 1025 L2021 1015 Z" fill="#4ae22a"/><path d="M1573 712 L1600 684 L1627 712 L1612 712 L1612 742 L1588 742 L1588 712 Z" fill="#48aee0" stroke="#f8e0da" stroke-width="14" stroke-linejoin="round"/><path d="M1573 712 L1600 684 L1627 712 L1612 712 L1612 742 L1588 742 L1588 712 Z" fill="#48aee0" stroke="#555" stroke-width="5" stroke-linejoin="round"/><path d="M1609 753 L1699 706" stroke="#ff2a2a" stroke-width="3"/><path d="M1600 645 V685" stroke="#4433dd" stroke-width="3"/><text x="1590" y="612" font-family="Liberation Sans" font-size="22" fill="#7a6af0">Z</text><text x="1712" y="702" font-family="Liberation Sans" font-size="24" fill="#ff5050">X</text></svg></div>
<div class="a" style="left:1083px;top:353px;width:1037px;height:59px;background:#f0f0f0;"></div>
<svg style="left:1095px;top:364px;" width="32" height="37" viewBox="0 0 32 37"><path d="M8 14 V10 Q8 2 16 2 Q24 2 24 10 V14" fill="none" stroke="#d9252b" stroke-width="4"/><rect x="1" y="14" width="30" height="22" rx="2" fill="#d9252b"/><circle cx="16" cy="23" r="3" fill="#fff"/><rect x="14.5" y="23" width="3" height="7" fill="#fff"/></svg>
<div class="t" style="left:1146.7px;top:367.7px;font-size:30.52px;color:#333;font-weight:bold;transform:scaleX(0.8783);">Read-Only:</div>
<div class="t" style="left:1345.6px;top:367.7px;font-size:30.52px;color:#3c3c3c;transform:scaleX(0.8709);">Document limit has been reached</div>
<div class="a" style="left:1781px;top:353px;width:3px;height:59px;background:#cfcfcf;"></div>
<div class="t" style="left:1817.4px;top:367.7px;font-size:30.52px;color:#1f7fd3;transform:scaleX(0.8519);">My Editable Documents</div>
<svg style="left:2990px;top:390px;" width="180" height="180" viewBox="0 0 180 180"><defs><linearGradient id="vcl" x1="0" y1="0" x2="0" y2="1"><stop offset="0" stop-color="#f2f2f2"/><stop offset="1" stop-color="#dedede"/></linearGradient>
<radialGradient id="vcs" cx="0.5" cy="0.5" r="0.5"><stop offset="0" stop-color="#000" stop-opacity="0.18"/><stop offset="1" stop-color="#000" stop-opacity="0"/></radialGradient></defs>
<ellipse cx="88" cy="140" rx="80" ry="32" fill="url(#vcs)"/>
<path d="M88 9 L153 35 L149 112 L88 156 L23 109 L21 34 Z" fill="url(#vcl)"/>
<path d="M21 34 L88 9 L153 35 L88 65 Z" fill="#efefef"/>
<path d="M88 9 L153 35 L149 112 L88 156 L23 109 L21 34 Z M21 34 L88 65 L153 35" fill="none" stroke="#555" stroke-width="1.6" stroke-dasharray="6 5"/>
<path d="M88 54 V156" stroke="#4a48e0" stroke-width="3.2"/>
<path d="M24 109 L88 156" stroke="#7fdc7f" stroke-width="3.2"/>
<path d="M88 156 L149 114" stroke="#ef6a6a" stroke-width="3.2"/>
<text x="80" y="46" font-family="Liberation Sans" font-weight="bold" font-size="20" fill="#7a7af0">Z</text>
<text x="40" y="88" font-family="Liberation Sans" font-size="14" fill="#666" transform="rotate(40 40 88)">LEFT</text>
<text x="99" y="117" font-family="Liberation Sans" font-size="13" fill="#666" transform="rotate(-30 99 117)">FRONT</text>
<text x="5" y="112" font-family="Liberation Sans" font-size="20" fill="#8be88b">Y</text>
<text x="150" y="124" font-family="Liberation Sans" font-size="20" fill="#f39a9a">X</text></svg>
<div class="a" style="left:2565px;top:583px;width:625px;height:1042px;background:#f0f0f0;border:2px solid #cdcdcd"></div>
<div class="a" style="left:2567px;top:641px;width:621px;height:3px;background:#d6d6d6;"></div>
<svg style="left:2568px;top:600px;" width="8" height="24" viewBox="0 0 8 24"><path d="M2 0 V24 M6 3 V21" stroke="#555" stroke-width="1.6"/></svg>
<svg style="left:2594px;top:602px;" width="25" height="25" viewBox="0 0 25 25"><circle cx="12.5" cy="12.5" r="12" fill="#333"/><rect x="5.5" y="10.5" width="14" height="4" fill="#f0f0f0"/></svg>
<div class="t" style="left:2627.0px;top:599.7px;font-size:26.89px;color:#6a6a6a;transform:scaleX(0.9338);">2D CONTOUR : 2D CONTOUR7</div>
<svg style="left:3152px;top:606px;" width="26" height="16" viewBox="0 0 26 16"><path d="M0 0 L13 8 L0 16Z M13 0 L26 8 L13 16Z" fill="#333"/></svg>
<div class="a" style="left:2567px;top:713px;width:621px;height:3px;background:#d6d6d6;"></div>
<div class="a" style="left:2708px;top:651px;width:74px;height:65px;background:#f0f0f0;border:2px solid #d2d2d2;border-bottom:none"></div>
<div class="a" style="left:2637px;top:652px;width:2px;height:62px;background:#d2d2d2;"></div>
<div class="a" style="left:2854px;top:652px;width:2px;height:62px;background:#d2d2d2;"></div>
<div class="a" style="left:2926px;top:652px;width:2px;height:62px;background:#d2d2d2;"></div>
<svg style="left:2586px;top:664px;" width="32" height="42" viewBox="0 0 32 42"><path d="M4 4 Q4 0 16 0 Q28 0 28 4 V12 Q28 16 22 18 L22 36 Q16 44 10 36 L10 18 Q4 16 4 12 Z" fill="#f4f4f4" stroke="#444" stroke-width="2"/><path d="M10 28 L22 20 M10 36 L22 28" stroke="#444" stroke-width="2"/></svg>
<svg style="left:2651px;top:662px;" width="42" height="42" viewBox="0 0 42 42"><path d="M2 22 L12 12 H40 V30 L30 40 H2 Z" fill="#f4f4f4" stroke="#444" stroke-width="2"/><path d="M14 2 H40 V26 L30 36 V12 H14Z" fill="#8ec0ec" stroke="#3a7ab8" stroke-width="2"/></svg>
<svg style="left:2723px;top:662px;" width="42" height="42" viewBox="0 0 42 42"><path d="M10 2 H40 L30 12 H2 Z" fill="#f39a1e"/><path d="M2 24 L12 14 H40 V30 L30 40 H2 Z" fill="#f4f4f4" stroke="#444" stroke-width="2"/><path d="M2 24 H30 V40 M30 24 L40 14" fill="none" stroke="#444" stroke-width="1.5"/></svg>
<svg style="left:2797px;top:662px;" width="42" height="42" viewBox="0 0 42 42"><path d="M2 2 V40 H40 V2" fill="none" stroke="#444" stroke-width="3"/><path d="M10 2 V32 H32 V2" fill="none" stroke="#444" stroke-width="2"/><rect x="11" y="12" width="20" height="5" fill="#3a8ae0"/><rect x="11" y="22" width="20" height="5" fill="#3a8ae0"/></svg>
<svg style="left:2869px;top:662px;" width="42" height="42" viewBox="0 0 42 42"><path d="M2 18 V2 H40 V18" fill="none" stroke="#f2e200" stroke-width="4"/><rect x="2" y="18" width="38" height="4" fill="#3cbf3c"/><path d="M2 40 V30 H16 V14 H26 V30 H40 V40 Z" fill="#f4f4f4" stroke="#444" stroke-width="2.5"/></svg>
<div class="a" style="left:2567px;top:716px;width:600px;height:818px;overflow:hidden">
<div class="a" style="left:-2567px;top:-716px;width:3200px;height:1800px">
<div class="a" style="left:2731px;top:718px;width:376px;height:57px;background:#fff;border:2px solid #dadada"></div>
<div class="a" style="left:3073px;top:720px;width:32px;height:53px;background:#e8e8e8;"></div>
<div class="a" style="left:3073px;top:746px;width:32px;height:2px;background:#f4f4f4;"></div>
<svg style="left:3082px;top:729.5px;" width="14" height="8" viewBox="0 0 14 8"><path d="M0 8 L7 0 L14 8Z" fill="#222"/></svg>
<svg style="left:3082px;top:755.5px;" width="14" height="8" viewBox="0 0 14 8"><path d="M0 0 L7 8 L14 0Z" fill="#222"/></svg>
<div class="t" style="left:2738.0px;top:731.9px;font-size:29.07px;color:#3c3c3c;transform:scaleX(0.9000);">0.2 in</div>
<div class="t" style="left:2598.0px;top:729.4px;font-size:29.07px;color:#3c3c3c;transform:scaleX(0.9998);">Offset</div>
<div class="a" style="left:2570px;top:791px;width:586px;height:7px;background:#cbcbcb;border-radius:3px"></div>
<svg style="left:2590px;top:836.7px;" width="22" height="15" viewBox="0 0 22 15"><path d="M0 0 H22 L11 15Z" fill="#333"/></svg>
<div class="t" style="left:2628.0px;top:829.1px;font-size:29.07px;color:#3c3c3c;font-weight:bold;transform:scaleX(0.9708);">Feed Height</div>
<div class="t" style="left:2598.0px;top:903.4px;font-size:29.07px;color:#3c3c3c;transform:scaleX(0.8847);">From</div>
<div class="a" style="left:2729px;top:886px;width:379px;height:65px;background:#fff;border:2px solid #dadada;border-radius:4px"></div>
<div class="t" style="left:2748.0px;top:903.9px;font-size:29.07px;color:#3c3c3c;transform:scaleX(0.9200);">Stock top</div>
<svg style="left:3079px;top:913.5px;" width="16" height="10" viewBox="0 0 16 10"><path d="M0 0 H16 L8 10Z" fill="#222"/></svg>
<div class="t" style="left:2598.0px;top:978.4px;font-size:29.07px;color:#3c3c3c;transform:scaleX(0.9998);">Offset</div>
<div class="a" style="left:2731px;top:962px;width:376px;height:63px;background:#fff;border:2px solid #dadada"></div>
<div class="a" style="left:3073px;top:964px;width:32px;height:59px;background:#e8e8e8;"></div>
<div class="a" style="left:3073px;top:993px;width:32px;height:2px;background:#f4f4f4;"></div>
<svg style="left:3082px;top:976.5px;" width="14" height="8" viewBox="0 0 14 8"><path d="M0 8 L7 0 L14 8Z" fill="#222"/></svg>
<svg style="left:3082px;top:1002.5px;" width="14" height="8" viewBox="0 0 14 8"><path d="M0 0 L7 8 L14 0Z" fill="#222"/></svg>
<div class="t" style="left:2738.0px;top:978.9px;font-size:29.07px;color:#3c3c3c;transform:scaleX(0.9000);">0.2 in</div>
<div class="a" style="left:2570px;top:1042px;width:586px;height:7px;background:#cbcbcb;border-radius:3px"></div>
<svg style="left:2590px;top:1085px;" width="22" height="15" viewBox="0 0 22 15"><path d="M0 0 H22 L11 15Z" fill="#333"/></svg>
<div class="t" style="left:2628.0px;top:1077.4px;font-size:29.07px;color:#3c3c3c;font-weight:bold;transform:scaleX(0.9825);">Top Height</div>
<div class="t" style="left:2598.0px;top:1154.2px;font-size:29.07px;color:#3c3c3c;transform:scaleX(0.8847);">From</div>
<div class="a" style="left:2729px;top:1134px;width:379px;height:68px;background:#fff;border:2px solid #dadada;border-radius:4px"></div>
<div class="t" style="left:2748.0px;top:1153.4px;font-size:29.07px;color:#3c3c3c;transform:scaleX(0.9159);">Stock top</div>
<svg style="left:3079px;top:1163.0px;" width="16" height="10" viewBox="0 0 16 10"><path d="M0 0 H16 L8 10Z" fill="#222"/></svg>
<div class="t" style="left:2598.0px;top:1229.2px;font-size:29.07px;color:#3c3c3c;transform:scaleX(0.9998);">Offset</div>
<div class="a" style="left:2731px;top:1212px;width:376px;height:63px;background:#fff;border:2px solid #dadada"></div>
<div class="a" style="left:3073px;top:1214px;width:32px;height:59px;background:#e8e8e8;"></div>
<div class="a" style="left:3073px;top:1243px;width:32px;height:2px;background:#f4f4f4;"></div>
<svg style="left:3082px;top:1226.5px;" width="14" height="8" viewBox="0 0 14 8"><path d="M0 8 L7 0 L14 8Z" fill="#222"/></svg>
<svg style="left:3082px;top:1252.5px;" width="14" height="8" viewBox="0 0 14 8"><path d="M0 0 L7 8 L14 0Z" fill="#222"/></svg>
<div class="t" style="left:2738.0px;top:1228.9px;font-size:29.07px;color:#3c3c3c;transform:scaleX(0.8748);">0 in</div>
<div class="a" style="left:2570px;top:1293px;width:586px;height:7px;background:#cbcbcb;border-radius:3px"></div>
<svg style="left:2590px;top:1336px;" width="22" height="15" viewBox="0 0 22 15"><path d="M0 0 H22 L11 15Z" fill="#333"/></svg>
<div class="t" style="left:2628.0px;top:1328.4px;font-size:29.07px;color:#3c3c3c;font-weight:bold;transform:scaleX(0.9674);">Bottom Height</div>
<div class="t" style="left:2598.0px;top:1403.9px;font-size:29.07px;color:#3c3c3c;transform:scaleX(0.8847);">From</div>
<div class="a" style="left:2729px;top:1385px;width:379px;height:66px;background:#fff;border:2px solid #dadada;border-radius:4px"></div>
<div class="t" style="left:2748.0px;top:1403.4px;font-size:29.07px;color:#3c3c3c;transform:scaleX(0.9077);">Stock bottom</div>
<svg style="left:3079px;top:1413.0px;" width="16" height="10" viewBox="0 0 16 10"><path d="M0 0 H16 L8 10Z" fill="#222"/></svg>
<div class="t" style="left:2598.0px;top:1479.4px;font-size:29.07px;color:#3c3c3c;transform:scaleX(0.9998);">Offset</div>
<div class="a" style="left:2731px;top:1461px;width:376px;height:64px;background:#fff;border:2px solid #dadada"></div>
<div class="a" style="left:3073px;top:1463px;width:32px;height:60px;background:#e8e8e8;"></div>
<div class="a" style="left:3073px;top:1493px;width:32px;height:2px;background:#f4f4f4;"></div>
<svg style="left:3082px;top:1476.0px;" width="14" height="8" viewBox="0 0 14 8"><path d="M0 8 L7 0 L14 8Z" fill="#222"/></svg>
<svg style="left:3082px;top:1502.0px;" width="14" height="8" viewBox="0 0 14 8"><path d="M0 0 L7 8 L14 0Z" fill="#222"/></svg>
<div class="t" style="left:2738.0px;top:1478.4px;font-size:29.07px;color:#3c3c3c;transform:scaleX(0.8748);">0 in</div>
</div></div>
<div class="a" style="left:3167px;top:718px;width:15px;height:816px;background:#d2d2d2;border-radius:7px"></div>
<div class="a" style="left:3167px;top:994px;width:15px;height:540px;background:#9a9a9a;border-radius:7px"></div>
<div class="a" style="left:2567px;top:1533px;width:621px;height:2px;background:#d6d6d6;"></div>
<svg style="left:2587px;top:1566px;" width="33" height="33" viewBox="0 0 33 33"><circle cx="16.5" cy="16.5" r="16" fill="#111"/><rect x="14" y="14" width="5.5" height="12" fill="#fff"/><rect x="11.5" y="14" width="5" height="3" fill="#fff"/><rect x="11.5" y="24" width="10" height="3" fill="#fff"/><circle cx="16.5" cy="9" r="3" fill="#fff"/></svg>
<div class="a" style="left:2835px;top:1557px;width:149px;height:45px;background:#e6e6e6;border:2px solid #cfcfcf"></div>
<div class="t" style="left:2889.0px;top:1565.4px;font-size:29.07px;color:#7a7a7a;transform:scaleX(0.9524);">OK</div>
<div class="a" style="left:3010px;top:1557px;width:149px;height:45px;background:#e6e6e6;border:2px solid #cfcfcf"></div>
<div class="t" style="left:3036.0px;top:1565.4px;font-size:29.07px;color:#7a7a7a;transform:scaleX(1.0388);">Cancel</div>
<div class="a" style="left:2443px;top:1069px;width:357px;height:37px;background:#f2f2f2;border:2px solid #777"></div>
<div class="t" style="left:2452.0px;top:1073.1px;font-size:30.52px;color:#111;transform:scaleX(0.8737);">Clearance Height Reference</div>
<div class="a" style="left:10px;top:1628px;width:929px;height:63px;background:#f0f0f0;border:2px solid #c9c9c9"></div>
<div class="t" style="left:73.4px;top:1643.4px;font-size:29.07px;color:#6a6a6a;transform:scaleX(0.8292);">COMMENTS</div>
<svg style="left:886px;top:1648px;" width="24" height="24" viewBox="0 0 24 24"><circle cx="12" cy="12" r="11.5" fill="#333"/><rect x="5" y="10" width="14" height="4" fill="#f0f0f0"/><rect x="10" y="5" width="4" height="14" fill="#f0f0f0"/></svg>
<svg style="left:926px;top:1648px;" width="10" height="24" viewBox="0 0 10 24"><path d="M2 0 V24 M7 3 V21" stroke="#555" stroke-width="1.6"/></svg>
<div class="a" style="left:1148px;top:1630px;width:902px;height:60px;background:#f0f0f0;"></div>
<div class="a" style="left:0px;top:1700px;width:3200px;height:100px;background:#1f1f1f;"></div>
<svg style="left:40px;top:1730px;" width="40" height="40" viewBox="0 0 40 40"><path d="M0 5 L17 3 V19 H0Z M19 2.6 L40 0 V19 H19Z M0 21 H17 V37 L0 35Z M19 21 H40 V40 L19 37.4Z" fill="#fff"/></svg>
<div class="a" style="left:120px;top:1701px;width:859px;height:99px;background:#f0f0f0;border:2px solid #bdbdbd;border-bottom:none"></div>
<svg style="left:150px;top:1724px;" width="52" height="52" viewBox="0 0 52 52"><circle cx="32" cy="19" r="15.5" fill="none" stroke="#111" stroke-width="2.8"/><path d="M21 30 L3 49" stroke="#111" stroke-width="3"/></svg>
<div class="t" style="left:232.0px;top:1732.8px;font-size:37.79px;color:#222;transform:scaleX(0.9730);">Type here to search</div>
<svg style="left:1020px;top:1730px;" width="40" height="40" viewBox="0 0 40 40"><circle cx="20" cy="20" r="17.5" fill="none" stroke="#fff" stroke-width="4.5"/></svg>
<svg style="left:1155px;top:1639px;" width="42" height="42" viewBox="0 0 42 42"><path d="M19 2 V40" stroke="#333" stroke-width="3"/><path d="M13 9 L19 2 L25 9" fill="none" stroke="#333" stroke-width="3"/><path d="M22 20 Q40 22 38 30 Q34 38 14 34" fill="none" stroke="#333" stroke-width="3"/><path d="M2 30 L12 24 L12 36Z" fill="#333"/></svg>
<svg style="left:1209px;top:1655px;" width="13" height="8" viewBox="0 0 13 8"><path d="M0 0 H13 L6.5 8Z" fill="#333"/></svg>
<svg style="left:1236px;top:1643px;" width="43" height="38" viewBox="0 0 43 38"><rect x="2" y="14" width="38" height="22" rx="2" fill="none" stroke="#555" stroke-width="3"/><rect x="9" y="20" width="24" height="10" fill="#c8c8c8" stroke="#555" stroke-width="1.5"/><path d="M6 14 L10 2 M14 14 L18 4 L32 2 L32 12" fill="none" stroke="#555" stroke-width="2.5"/></svg>
<svg style="left:1302px;top:1639px;" width="42" height="42" viewBox="0 0 42 42"><path d="M12 40 Q4 30 4 22 Q4 18 8 20 L12 26 V8 Q12 4 15 4 Q18 4 18 8 V18 V4 Q18 1 21 1 Q24 1 24 4 V18 V6 Q24 3 27 3 Q30 3 30 6 V18 V10 Q30 7 33 7 Q36 7 36 10 V28 Q36 36 30 40Z" fill="#f4f4f4" stroke="#555" stroke-width="2.5" stroke-linejoin="round"/></svg>
<svg style="left:1366px;top:1639px;" width="44" height="40" viewBox="0 0 44 40"><circle cx="15" cy="20" r="11" fill="#d8eaf6" stroke="#555" stroke-width="3"/><path d="M23 28 L33 38" stroke="#333" stroke-width="6" stroke-linecap="round"/><path d="M30 10 H42 M36 4 V16" stroke="#555" stroke-width="2.5"/></svg>
<svg style="left:1431px;top:1639px;" width="44" height="42" viewBox="0 0 44 42"><rect x="2" y="2" width="40" height="38" fill="none" stroke="#666" stroke-width="2" stroke-dasharray="4 3"/><circle cx="19" cy="18" r="12" fill="#d8eaf6" stroke="#555" stroke-width="3"/><path d="M28 27 L39 38" stroke="#333" stroke-width="6" stroke-linecap="round"/></svg>
<svg style="left:1487px;top:1655px;" width="13" height="8" viewBox="0 0 13 8"><path d="M0 0 H13 L6.5 8Z" fill="#333"/></svg>
<svg style="left:1513px;top:1640px;" width="44" height="42" viewBox="0 0 44 42"><rect x="2" y="2" width="40" height="30" rx="3" fill="#a9c8ec" stroke="#555" stroke-width="3"/><rect x="8" y="8" width="28" height="18" fill="#cfe2f6"/><path d="M16 34 L14 40 H30 L28 34" fill="none" stroke="#555" stroke-width="2.5"/></svg>
<svg style="left:1562px;top:1655px;" width="13" height="8" viewBox="0 0 13 8"><path d="M0 0 H13 L6.5 8Z" fill="#333"/></svg>
<svg style="left:1593px;top:1641px;" width="40" height="40" viewBox="0 0 40 40"><rect x="2" y="2" width="36" height="36" fill="#e8e8e8"/><path d="M2 2 V38 M2 2 H38" stroke="#666" stroke-width="2"/><path d="M8 2 V38 M2 8 H38" stroke="#666" stroke-width="2"/><path d="M14 2 V38 M2 14 H38" stroke="#666" stroke-width="2"/><path d="M20 2 V38 M2 20 H38" stroke="#666" stroke-width="2"/><path d="M26 2 V38 M2 26 H38" stroke="#666" stroke-width="2"/><path d="M32 2 V38 M2 32 H38" stroke="#666" stroke-width="2"/><path d="M38 2 V38 M2 38 H38" stroke="#666" stroke-width="2"/></svg>
<svg style="left:1640px;top:1655px;" width="13" height="8" viewBox="0 0 13 8"><path d="M0 0 H13 L6.5 8Z" fill="#333"/></svg>
<svg style="left:1669px;top:1641px;" width="42" height="42" viewBox="0 0 42 42"><path d="M2 12 L12 2 H40 V30 L30 40 H2Z" fill="#9fc2ea" stroke="#555" stroke-width="2.5"/><path d="M2 12 H30 V40 M30 12 L40 2" fill="none" stroke="#555" stroke-width="2"/><circle cx="16" cy="26" r="6" fill="#fff" stroke="#555" stroke-width="2"/><path d="M10 32 L22 20" stroke="#555" stroke-width="2"/></svg>
<svg style="left:1718px;top:1655px;" width="13" height="8" viewBox="0 0 13 8"><path d="M0 0 H13 L6.5 8Z" fill="#333"/></svg>
<svg style="left:1747px;top:1644px;" width="44" height="36" viewBox="0 0 44 36"><rect x="8" y="2" width="28" height="8" fill="#a9c8ec" stroke="#1f4f8a" stroke-width="1.5"/><rect x="8" y="14" width="28" height="8" fill="#a9c8ec" stroke="#1f4f8a" stroke-width="1.5"/><rect x="8" y="26" width="28" height="8" fill="#a9c8ec" stroke="#1f4f8a" stroke-width="1.5"/><path d="M2 18 Q2 10 22 10 Q42 10 42 18 Q42 26 22 26 Q2 26 2 18Z" fill="none" stroke="#1f4f8a" stroke-width="2.5"/></svg>
<svg style="left:1797px;top:1655px;" width="13" height="8" viewBox="0 0 13 8"><path d="M0 0 H13 L6.5 8Z" fill="#333"/></svg>
<svg style="left:1825px;top:1641px;" width="42" height="40" viewBox="0 0 42 40"><path d="M6 18 Q8 4 22 4 Q32 4 36 12" fill="none" stroke="#2a8ae0" stroke-width="4"/><path d="M36 22 Q34 36 20 36 Q10 36 6 28" fill="none" stroke="#1f4f8a" stroke-width="4"/><path d="M30 14 L40 4 L40 16Z" fill="#2a8ae0"/><path d="M12 26 L2 36 L2 24Z" fill="#1f4f8a"/></svg>
<svg style="left:1874px;top:1655px;" width="13" height="8" viewBox="0 0 13 8"><path d="M0 0 H13 L6.5 8Z" fill="#333"/></svg>
<svg style="left:1902px;top:1639px;" width="44" height="42" viewBox="0 0 44 42"><path d="M22 2 L42 20 L22 38 L2 20Z" fill="#5fa7e2" stroke="#4a8ac0" stroke-width="1.5"/><path d="M22 2 L42 16 L22 30 L2 16Z" fill="#8cc0ee"/><path d="M22 2 L36 12 L22 22 L8 12Z" fill="#b8d8f4"/></svg>
<svg style="left:1952px;top:1655px;" width="13" height="8" viewBox="0 0 13 8"><path d="M0 0 H13 L6.5 8Z" fill="#333"/></svg>
<svg style="left:1983px;top:1639px;" width="34" height="42" viewBox="0 0 34 42"><rect x="2" y="2" width="30" height="12" rx="2" fill="#d0d0d0" stroke="#aaa"/><rect x="9" y="14" width="16" height="26" fill="#c0c0c0"/><path d="M9 22 L25 16 M9 30 L25 24 M9 38 L25 32" stroke="#e8e8e8" stroke-width="3"/></svg>
<svg style="left:2029px;top:1655px;" width="13" height="8" viewBox="0 0 13 8"><path d="M0 0 H13 L6.5 8Z" fill="#333"/></svg>
<svg style="left:1140px;top:1730px;" width="42" height="42" viewBox="0 0 42 42"><path d="M4 6 V2 H26 V6 M4 36 V40 H26 V36 M2 10 H28 V32 H2Z" fill="none" stroke="#fff" stroke-width="2.5"/><path d="M36 2 V40" stroke="#fff" stroke-width="2.5"/><circle cx="36" cy="16" r="4" fill="#fff"/></svg>
<svg style="left:1260px;top:1726px;" width="56" height="48" viewBox="0 0 56 48"><path d="M2 6 Q2 2 6 2 H20 L26 8 H52 Q54 8 54 12 V44 Q54 46 52 46 H4 Q2 46 2 44Z" fill="#f8c648"/><path d="M2 14 H54 V44 Q54 46 52 46 H4 Q2 46 2 44Z" fill="#ffd95c"/><path d="M16 46 V30 H40 V46 H32 V36 H24 V46Z" fill="#2f8ad8"/></svg>
<svg style="left:1382px;top:1720px;" width="60" height="60" viewBox="0 0 60 60"><rect x="0" y="0" width="60" height="60" rx="6" fill="#1a3550"/><defs><linearGradient id="kg" x1="0" y1="0" x2="0" y2="1"><stop offset="0" stop-color="#1a5a9a"/><stop offset="1" stop-color="#8de0f8"/></linearGradient></defs><rect x="1" y="1" width="58" height="58" rx="5" fill="url(#kg)"/><path d="M0 52 Q30 44 60 52 V60 H0Z" fill="#111"/><circle cx="24" cy="12" r="6" fill="#111"/><path d="M18 18 L30 18 L34 34 L42 30 L46 34 L36 42 L40 52 H20 L14 40Z" fill="#111"/></svg>
<svg style="left:1506px;top:1720px;" width="66" height="66" viewBox="0 0 66 66"><circle cx="31" cy="33" r="30" fill="#db4437"/><path d="M31 33 L5 48 A30 30 0 0 0 46 59Z" fill="#0f9d58"/><path d="M31 33 L61 33 A30 30 0 0 1 46 59Z" fill="#ffcd40"/><circle cx="31" cy="33" r="13" fill="#fff"/><circle cx="31" cy="33" r="10" fill="#4285f4"/><circle cx="46" cy="50" r="15" fill="#d8a870"/><circle cx="41" cy="48" r="2" fill="#222"/><circle cx="51" cy="48" r="2" fill="#222"/><ellipse cx="46" cy="55" rx="4" ry="3" fill="#6a4a30"/></svg>
<svg style="left:1628px;top:1720px;" width="62" height="62" viewBox="0 0 62 62"><path d="M44 2 L60 10 V52 L44 60 L16 34 L6 42 L2 40 V22 L6 20 L16 28Z M44 16 L26 31 L44 46Z" fill="#1f9cf0"/><path d="M44 2 L60 10 V52 L44 60Z" fill="#0065a9"/><path d="M2 22 L6 20 L44 46 V60Z" fill="#007acc" opacity="0.8"/></svg>
<svg style="left:1754px;top:1720px;" width="60" height="60" viewBox="0 0 60 60"><circle cx="30" cy="30" r="29" fill="#1ed760"/><path d="M13 21 Q32 14 48 24 M16 31 Q32 25 45 33 M18 40 Q31 35 42 42" fill="none" stroke="#111" stroke-width="5" stroke-linecap="round"/></svg>
<svg style="left:1877px;top:1720px;" width="61" height="61" viewBox="0 0 61 61"><circle cx="30.5" cy="30.5" r="30" fill="#5865f2"/><path d="M17 20 Q24 16 27 17 L28 19 Q30.5 18.5 33 19 L34 17 Q37 16 44 20 Q49 30 48 41 Q43 45 38 46 L36 42 Q40 40 41 39 Q30.5 44 20 39 Q21 40 25 42 L23 46 Q18 45 13 41 Q12 30 17 20Z" fill="#fff"/><circle cx="24" cy="32" r="3.5" fill="#5865f2"/><circle cx="37" cy="32" r="3.5" fill="#5865f2"/></svg>
<div class="a" style="left:1972px;top:1700px;width:121px;height:100px;background:#3b3b3b;"></div>
<svg style="left:2001px;top:1720px;" width="60" height="60" viewBox="0 0 60 60"><rect x="0" y="0" width="60" height="60" fill="#fbdcc4"/><path d="M18 8 L44 8 L40 20 L28 20 L28 28 L38 28 L35 36 L28 36 L28 50 L18 50Z" fill="#f08a24"/><text x="34" y="56" font-family="Liberation Sans" font-weight="bold" font-size="13" fill="#f08a24">360</text></svg>
<div class="a" style="left:1238px;top:1794px;width:101px;height:6px;background:#f5a286;"></div>
<div class="a" style="left:1486px;top:1794px;width:101px;height:6px;background:#f5a286;"></div>
<div class="a" style="left:1734px;top:1794px;width:101px;height:6px;background:#f5a286;"></div>
<div class="a" style="left:1858px;top:1794px;width:101px;height:6px;background:#f5a286;"></div>
<div class="a" style="left:1972px;top:1794px;width:121px;height:6px;background:#f5a286;"></div>
<svg style="left:2323px;top:1724px;" width="56" height="52" viewBox="0 0 56 52"><circle cx="30" cy="20" r="17" fill="#f8c820"/><path d="M8 46 Q0 46 2 38 Q4 30 12 32 Q14 22 26 24 Q36 24 38 32 Q50 30 52 40 Q52 48 44 48Z" fill="#d4ecfa" stroke="#8cc8ee" stroke-width="1.5"/></svg>
<div class="t" style="left:2401.0px;top:1735.7px;font-size:33.43px;color:#ffffff;transform:scaleX(0.9440);">68°F</div>
<svg style="left:2522px;top:1743px;" width="34" height="16" viewBox="0 0 34 16"><path d="M2 14 L17 2 L32 14" fill="none" stroke="#fff" stroke-width="2.5"/></svg>
<svg style="left:2599px;top:1739px;" width="42" height="24" viewBox="0 0 42 24"><rect x="2" y="2" width="34" height="20" fill="none" stroke="#fff" stroke-width="2.5"/><rect x="36" y="8" width="4" height="8" fill="#fff"/><rect x="6" y="6" width="10" height="12" fill="#fff"/></svg>
<svg style="left:2684px;top:1736px;" width="34" height="32" viewBox="0 0 34 32"><path d="M4 30 Q6 10 30 4 M10 30 Q12 16 30 10 M16 30 Q18 20 30 16" fill="none" stroke="#fff" stroke-width="2"/><circle cx="28" cy="28" r="3.5" fill="#fff"/></svg>
<svg style="left:2764px;top:1730px;" width="30" height="40" viewBox="0 0 30 40"><rect x="0" y="0" width="30" height="40" rx="15" fill="#0a84ff"/><path d="M9 13 L21 25 L15 31 V9 L21 15 L9 27" fill="none" stroke="#fff" stroke-width="2.2"/></svg>
<svg style="left:2837px;top:1732px;" width="46" height="38" viewBox="0 0 46 38"><path d="M2 12 H10 L20 4 V34 L10 26 H2Z" fill="none" stroke="#fff" stroke-width="2.5"/><path d="M26 13 Q30 19 26 25 M32 8 Q38 19 32 30" fill="none" stroke="#fff" stroke-width="2.5"/><path d="M38 4 Q46 19 38 36" fill="none" stroke="#888" stroke-width="2.5"/></svg>
<div class="t" style="left:2929.0px;top:1713.1px;font-size:30.52px;color:#ffffff;transform:scaleX(0.9325);">7:14 PM</div>
<div class="t" style="left:2915.0px;top:1759.6px;font-size:30.52px;color:#ffffff;transform:scaleX(0.9794);">8/23/2021</div>
<svg style="left:3096px;top:1729px;" width="62" height="64" viewBox="0 0 62 64"><path d="M2 2 H42 V36 H14 L6 44 V36 H2Z" fill="#fff"/><path d="M8 12 H36 M8 19 H36 M8 26 H30" stroke="#1f1f1f" stroke-width="2.5"/><circle cx="38" cy="40" r="21" fill="#2a2a2a" stroke="#8a8a8a" stroke-width="2.5"/><text x="38" y="50" text-anchor="middle" font-family="Liberation Sans" font-size="28" fill="#fff">2</text></svg>
<div class="a" style="left:3196px;top:1700px;width:4px;height:100px;background:#6a6a6a;"></div>
</body></html>
